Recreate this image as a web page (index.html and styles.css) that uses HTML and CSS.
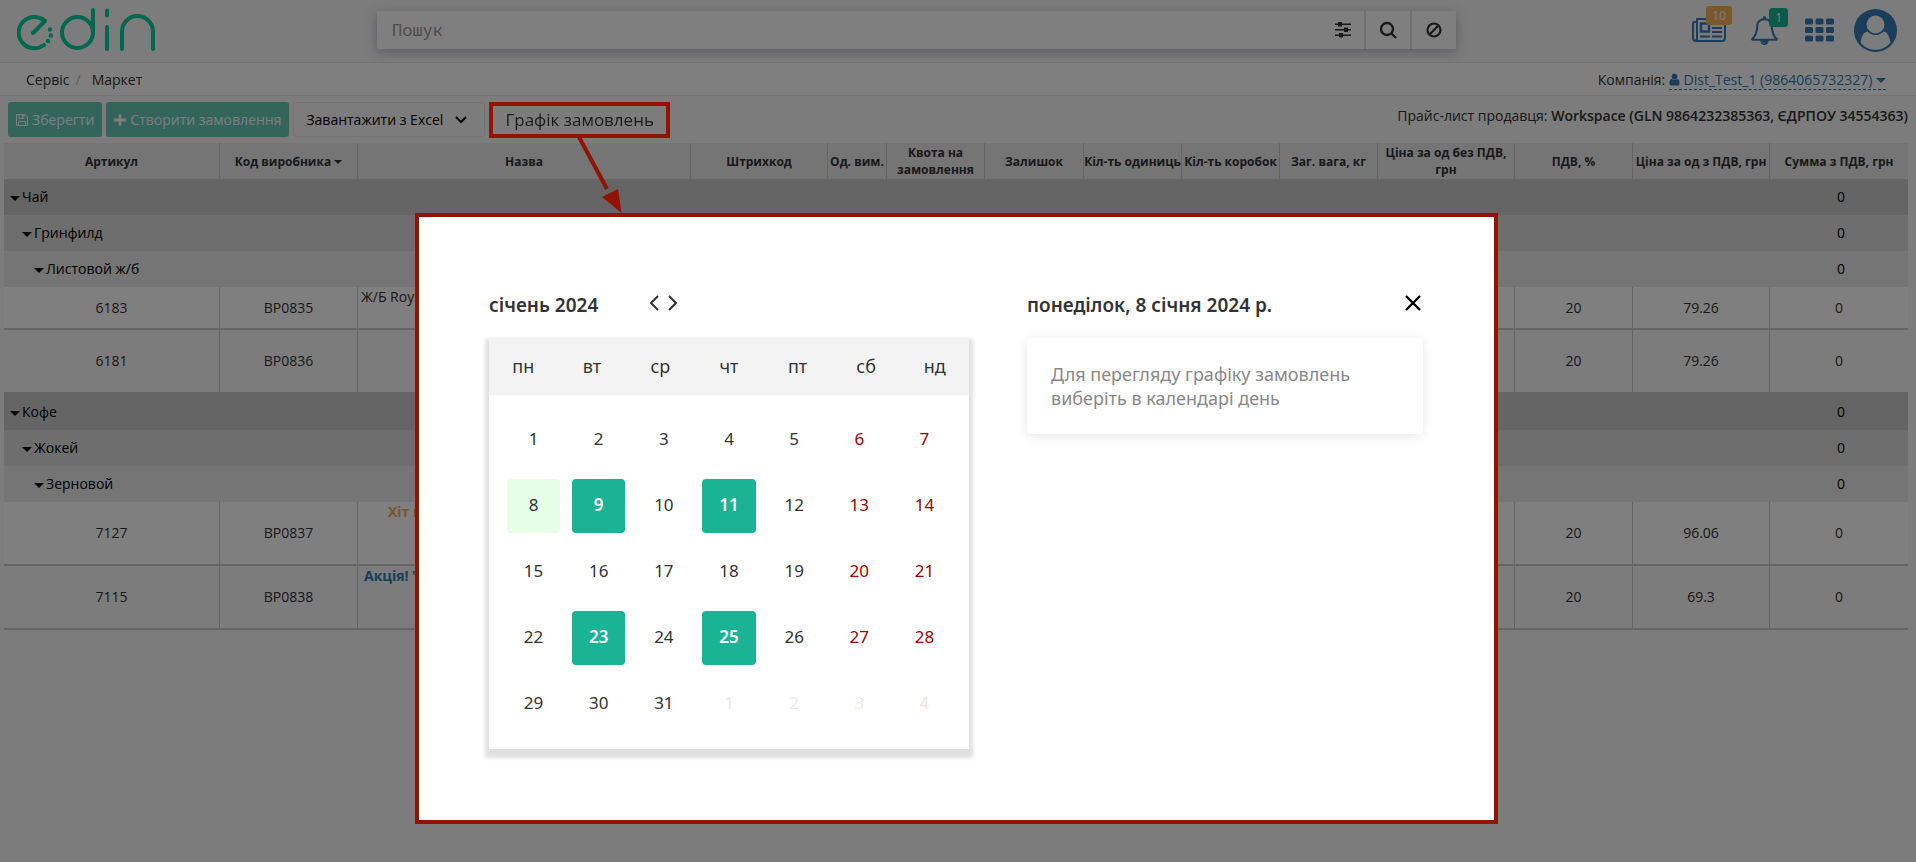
FILE: index.html
```html
<!DOCTYPE html>
<html lang="uk">
<head>
<meta charset="utf-8">
<title>EDIN Маркет</title>
<link rel="stylesheet" href="styles.css">
</head>
<body>
<header class="topbar">
  <a class="logo" href="#" aria-label="edin">
    <svg width="140" height="44" viewBox="0 0 140 44" fill="none" stroke="currentColor" stroke-width="4" stroke-linecap="round" stroke-linejoin="round">
      <path d="M16 25 L28 13 A15.700 15.700 0 1 0 27 37"/>
      <g fill="currentColor" stroke="none"><circle cx="33" cy="21.500" r="2.200"/><circle cx="33.800" cy="27.500" r="2.200"/><circle cx="31" cy="33" r="2.200"/></g>
      <circle cx="60.500" cy="24.500" r="15.500"/>
      <path d="M76 2V25M90 2.500V7.500M90 19V41M105 41V23.500A15.500 15.500 0 0 1 136 23.500V41"/>
    </svg>
  </a>
  <form class="search">
    <input class="search-input" type="text" placeholder="Пошук" aria-label="Пошук">
    <button class="search-btn filter" type="button" aria-label="Фільтри">
      <svg width="16" height="16" viewBox="0 0 16 16" fill="currentColor"><path d="M0 1.500h16v1.500H0zM0 7h16v1.500H0zM0 12.500h16v1.500H0z"/><rect x="3" y="0" width="4" height="4.500"/><rect x="9" y="5.500" width="4" height="4.500"/><rect x="4" y="11" width="4" height="4.500"/></svg>
    </button>
    <button class="search-btn" type="button" aria-label="Шукати">
      <svg width="18" height="18" viewBox="0 0 18 18" fill="none" stroke="currentColor" stroke-width="2.400"><circle cx="8" cy="8" r="6"/><path d="M12 12l5 5"/></svg>
    </button>
    <button class="search-btn" type="button" aria-label="Очистити">
      <svg width="16" height="16" viewBox="0 0 16 16" fill="none" stroke="currentColor" stroke-width="2.200"><circle cx="8" cy="8" r="6.500"/><path d="M12.500 3.500l-9 9"/></svg>
    </button>
  </form>
  <nav class="tools">
    <a class="tool news" href="#" aria-label="Новини">
      <svg width="34" height="24" viewBox="0 0 34 24" fill="none" stroke="currentColor" stroke-width="2"><path d="M5 4H2.500Q1 4 1 5.500V20Q1 23 4 23H30Q33 23 33 20V1H5V20Q5 23 3 23"/><rect x="9" y="5.500" width="8" height="8" stroke-width="2.400"/><path d="M20 5.500H30M20 10H30M20 14H30M20 18.500H30M8 18.500H18"/></svg>
      <span class="badge orange">10</span>
    </a>
    <a class="tool bell" href="#" aria-label="Сповіщення">
      <svg width="29" height="29" viewBox="0 0 1792 1792" fill="currentColor"><path d="M912 1696q0-16-16-16-59 0-101.500-42.500t-42.500-101.500q0-16-16-16t-16 16q0 73 51.500 124.500t124.500 51.500q16 0 16-16zm-666-288h1300q-266-300-266-832 0-51-24-105t-69-103-121.500-80.500-169.500-31.500-169.500 31.500-121.500 80.500-69 103-24 105q0 532-266 832zm1482 0q0 52-38 90t-90 38h-448q0 106-75 181t-181 75-181-75-75-181h-448q-52 0-90-38t-38-90q50-42 91-88t85-119.500 74.500-158.500 50-206 19.500-260q0-152 117-282.500t307-158.500q-8-19-8-39 0-40 28-68t68-28 68 28 28 68q0 20-8 39 190 28 307 158.500t117 282.500q0 139 19.500 260t50 206 74.500 158.500 85 119.500 91 88z"/></svg>
      <span class="badge green">1</span>
    </a>
    <a class="tool apps" href="#" aria-label="Сервіси">
      <svg width="29" height="24" viewBox="0 0 29 24" fill="currentColor"><rect width="8" height="6" y="0.500" rx="1.500"/><rect x="10.500" y="0.500" width="8" height="6" rx="1.500"/><rect x="21" y="0.500" width="8" height="6" rx="1.500"/><rect y="9" width="8" height="6" rx="1.500"/><rect x="10.500" y="9" width="8" height="6" rx="1.500"/><rect x="21" y="9" width="8" height="6" rx="1.500"/><rect y="17.500" width="8" height="6" rx="1.500"/><rect x="10.500" y="17.500" width="8" height="6" rx="1.500"/><rect x="21" y="17.500" width="8" height="6" rx="1.500"/></svg>
    </a>
    <a class="tool" href="#" aria-label="Профіль">
      <svg width="43" height="43" viewBox="0 0 43 43"><circle cx="21.500" cy="21.500" r="21.500" fill="currentColor"/><path d="M6.500 33.500C7.500 27 10 22.500 14 22.500Q17.500 26 21.500 26T29 22.500C33 22.500 35.500 27 36.500 33.500A19 19 0 0 1 6.500 33.500Z" fill="#f8f8f8"/><circle cx="21.500" cy="15.500" r="10.500" fill="currentColor"/><circle cx="21.500" cy="15.500" r="9" fill="#f8f8f8"/></svg>
    </a>
  </nav>
</header>

<div class="crumbbar">
  <nav class="crumbs"><a href="#">Сервіс</a><span class="slash">/</span><a href="#">Маркет</a></nav>
  <div class="company">Компанія:
    <a class="company-link" href="#"><svg width="11" height="13" viewBox="192 64 1408 1664" fill="currentColor"><path d="M1536 1399q0 109-62.500 187t-150.500 78h-854q-88 0-150.500-78t-62.500-187q0-85 8.500-160.500t31.500-152 58.500-131 94-89 134.500-34.500q131 128 313 128t313-128q76 0 134.500 34.500t94 89 58.500 131 31.500 152 8.500 160.500zm-256-887q0 159-112.500 271.500t-271.500 112.500-271.500-112.500-112.500-271.500 112.500-271.500 271.500-112.500 271.500 112.500 112.500 271.500z"/></svg> Dist_Test_1 (9864065732327) <span class="caret"></span></a>
  </div>
</div>

<main>
  <div class="toolbar">
    <button class="btn primary" type="button" disabled><svg width="12" height="12" viewBox="0 0 12 12" fill="none" stroke="currentColor"><path d="M.5.500H9L11.500 3V11.500H.5ZM3 .500V4.500H8V.500M2.500 11.500V7.500H9.500V11.500M6.500 1V3.500"/></svg>Зберегти</button>
    <button class="btn primary" type="button" disabled><svg width="12" height="12" viewBox="0 0 12 12" fill="currentColor"><path d="M4.500.500h3v4H12v3H7.500v4h-3v-4H0v-3h4.500z"/></svg>Створити замовлення</button>
    <label class="btn load">
      <select class="load-select" aria-label="Завантажити"><option>Завантажити з Excel</option></select>
      <svg width="12" height="8" viewBox="0 0 12 8" fill="none" stroke="currentColor" stroke-width="2"><path d="M1 1l5 5 5-5"/></svg>
    </label>
    <div class="highlight">
      <button class="schedule" type="button">Графік замовлень</button>
      <svg class="arrow" width="46" height="76" viewBox="0 0 46 76"><path d="M2 0L30 52" stroke="#911300" stroke-width="4" fill="none"/><path d="M44.500 76L25 60L41 52Z" fill="#911300"/></svg>
    </div>
    <div class="pricelist">Прайс-лист продавця: <b>Workspace (GLN 9864232385363, ЄДРПОУ 34554363)</b></div>
  </div>

  <table class="goods">
    <colgroup><col class="w216"><col class="w138"><col class="w333"><col class="w137"><col class="w59"><col class="w98"><col class="w99"><col class="w98"><col class="w98"><col class="w98"><col class="w137"><col class="w118"><col class="w137"><col class="w138"></colgroup>
    <thead>
      <tr><th>Артикул</th><th>Код виробника <span class="caret"></span></th><th>Назва</th><th>Штрихкод</th><th>Од. вим.</th><th>Квота на замовлення</th><th>Залишок</th><th>Кіл-ть одиниць</th><th>Кіл-ть коробок</th><th>Заг. вага, кг</th><th>Ціна за од без ПДВ, грн</th><th>ПДВ, %</th><th>Ціна за од з ПДВ, грн</th><th>Сумма з ПДВ, грн</th></tr>
    </thead>
    <tbody>
      <tr class="group g1"><td colspan="13"><span class="caret"></span>Чай</td><td>0</td></tr>
      <tr class="group g2"><td colspan="13"><span class="caret"></span>Гринфилд</td><td>0</td></tr>
      <tr class="group g3"><td colspan="13"><span class="caret"></span>Листовой ж/б</td><td>0</td></tr>
      <tr class="item short"><td>6183</td><td>BP0835</td><td class="name">Ж/Б Roy</td><td></td><td></td><td></td><td></td><td></td><td></td><td></td><td></td><td>20</td><td>79.26</td><td>0</td></tr>
      <tr class="item alt"><td>6181</td><td>BP0836</td><td></td><td></td><td></td><td></td><td></td><td></td><td></td><td></td><td></td><td>20</td><td>79.26</td><td>0</td></tr>
      <tr class="group g1"><td colspan="13"><span class="caret"></span>Кофе</td><td>0</td></tr>
      <tr class="group g2"><td colspan="13"><span class="caret"></span>Жокей</td><td>0</td></tr>
      <tr class="group g3"><td colspan="13"><span class="caret"></span>Зерновой</td><td>0</td></tr>
      <tr class="item"><td>7127</td><td>BP0837</td><td class="name hit"><b>Хіт п</b></td><td></td><td></td><td></td><td></td><td></td><td></td><td></td><td></td><td>20</td><td>96.06</td><td>0</td></tr>
      <tr class="item alt"><td>7115</td><td>BP0838</td><td class="name promo"><b>Акція!</b> "</td><td></td><td></td><td></td><td></td><td></td><td></td><td></td><td></td><td>20</td><td>69.3</td><td>0</td></tr>
    </tbody>
  </table>
</main>

<div class="overlay">
  <section class="modal" role="dialog" aria-label="Графік замовлень">
    <div class="left">
      <div class="head">
        <h2>січень 2024</h2>
        <div class="arrows">
          <button type="button" aria-label="Попередній місяць"><svg width="10" height="16" viewBox="0 0 10 16" fill="none" stroke="currentColor" stroke-width="2"><path d="M9 1L2 8l7 7"/></svg></button>
          <button type="button" aria-label="Наступний місяць"><svg width="10" height="16" viewBox="0 0 10 16" fill="none" stroke="currentColor" stroke-width="2"><path d="M1 1l7 7-7 7"/></svg></button>
        </div>
      </div>
      <div class="calendar">
        <div class="weekdays"><span>пн</span><span>вт</span><span>ср</span><span>чт</span><span>пт</span><span>сб</span><span>нд</span></div>
        <div class="days">
          <button>1</button><button>2</button><button>3</button><button>4</button><button>5</button><button class="we">6</button><button class="we">7</button>
          <button class="today">8</button><button class="on">9</button><button>10</button><button class="on">11</button><button>12</button><button class="we">13</button><button class="we">14</button>
          <button>15</button><button>16</button><button>17</button><button>18</button><button>19</button><button class="we">20</button><button class="we">21</button>
          <button>22</button><button class="on">23</button><button>24</button><button class="on">25</button><button>26</button><button class="we">27</button><button class="we">28</button>
          <button>29</button><button>30</button><button>31</button><button class="out">1</button><button class="out">2</button><button class="we out">3</button><button class="we out">4</button>
        </div>
      </div>
    </div>
    <div class="right">
      <div class="head">
        <h2>понеділок, 8 січня 2024 р.</h2>
        <button class="close" type="button" aria-label="Закрити"><svg width="16" height="16" viewBox="0 0 16 16" fill="none" stroke="currentColor" stroke-width="2.400"><path d="M1 1l14 14M15 1L1 15"/></svg></button>
      </div>
      <p class="hint">Для перегляду графіку замовлень виберіть в календарі день</p>
    </div>
  </section>
</div>
</body>
</html>
```

FILE: styles.css
```css
* { box-sizing: border-box; }
body {
  margin: 0;
  min-height: 100vh;
  background: #f8f8f8;
  color: #333;
  font: 14px/20px "Open Sans", "Noto Sans", sans-serif;
}
a { color: inherit; text-decoration: none; }
button, select, input { font: inherit; color: inherit; }
button { padding: 0; border: 0; background: none; }
svg { display: block; flex: none; }
b { font-weight: 600; }

.caret {
  display: inline-block;
  border: 4px solid transparent;
  border-top-color: currentColor;
  border-bottom: 0;
  vertical-align: middle;
}

.topbar {
  display: flex;
  justify-content: space-between;
  align-items: flex-start;
  height: 63px;
  padding: 0 19px 0 17px;
  border-bottom: 1px solid #e7e7e7;
}
.logo { width: 360px; padding-top: 8px; color: #00cfa0; }
.search {
  display: flex;
  flex: 1;
  max-width: 1079px;
  height: 38px;
  margin-top: 11px;
  background: #fff;
  box-shadow: 0 3px 12px rgba(60, 60, 110, .35);
}
.search-input {
  flex: 1;
  min-width: 0;
  padding: 0 15px;
  border: 0;
  background: none;
  font: 17px/38px "Noto Sans Mono", "DejaVu Sans Mono", monospace;
}
.search-input::placeholder { color: #999; }
.search-btn {
  display: flex;
  justify-content: center;
  align-items: center;
  width: 46px;
  border-left: 2px solid #e3e3e3;
}
.search-btn.filter { width: 42px; border-left: 0; }
.tools {
  display: flex;
  width: 441px;
  justify-content: flex-end;
  align-items: center;
  gap: 20px;
  height: 60px;
  color: #337ab7;
}
.tool { position: relative; }
.tool.bell { margin-left: 4px; }
.tool.apps { margin-left: 6px; }
.badge {
  position: absolute;
  top: -12px;
  right: -6px;
  padding: 0 6px;
  border-radius: 3px;
  color: #fff;
  font-size: 12px;
  line-height: 19px;
}
.bell .badge { top: -8px; right: -9px; }
.orange { background: #f8ac59; }
.green { background: #1ab394; }

.crumbbar {
  display: flex;
  justify-content: space-between;
  align-items: center;
  height: 33px;
  padding: 1px 30px 0 26px;
  border-bottom: 1px solid #e7e7e7;
  background: #fff;
}
.slash { padding: 0 11px 0 6px; color: #bbb; }
.company-link {
  display: inline-block;
  border-bottom: 1px dashed #337ab7;
  color: #337ab7;
  line-height: 18px;
}
.company-link svg { display: inline-block; vertical-align: -1px; }
.company-link .caret { border-width: 5px; border-bottom: 0; }

main { padding: 6px 8px 0 4px; }
.toolbar {
  display: flex;
  gap: 4px;
  height: 41px;
  padding-left: 4px;
}
.btn {
  display: flex;
  align-items: center;
  gap: 4px;
  height: 35px;
  padding: 0 8px;
  border-radius: 3px;
}
.primary { background: #1ab394; color: #fff; opacity: .65; }
.load {
  gap: 12px;
  padding: 0 17px 0 12px;
  border: 1px solid #e7e7e7;
  color: #000;
}
.load-select {
  padding: 0;
  border: 0;
  background: none;
  appearance: none;
}
.highlight {
  position: relative;
  z-index: 20;
  height: 36px;
  border: 4px solid #911300;
}
.schedule {
  display: block;
  height: 28px;
  padding: 0 12px;
  color: #1a1a1a;
  font-size: 17px;
}
.arrow { position: absolute; top: 31px; left: 84px; }
.pricelist { margin-left: auto; padding-top: 4px; }

.goods {
  width: 100%;
  table-layout: fixed;
  border-collapse: separate;
  border-spacing: 0;
  text-align: center;
}
.w59 { width: 59px; }
.w98 { width: 98px; }
.w99 { width: 99px; }
.w118 { width: 118px; }
.w137 { width: 137px; }
.w138 { width: 138px; }
.w216 { width: 216px; }
.w333 { width: 333px; }
.goods th {
  height: 36px;
  padding: 0;
  border-right: 1px solid #cbcbcb;
  background: #ebebeb;
  font-size: 12px;
  line-height: 17px;
}
.goods td { padding: 0; }
.goods th:last-child, .goods td:last-child { border-right: 0; }
.group td { height: 36px; color: #000; }
.group td:first-child { text-align: left; }
.group td:last-child { padding-left: 4px; }
.group .caret { margin-right: 2px; border-width: 5px; border-bottom: 0; }
.g1 { background: #cbcbcb; }
.g2 { background: #dcdcdc; }
.g3 { background: #ebebeb; }
.g1 td:first-child { padding-left: 6px; }
.g2 td:first-child { padding-left: 18px; }
.g3 td:first-child { padding-left: 30px; }
.item { background: #fff; }
.item.alt { background: #f8f8f8; }
.item td {
  height: 64px;
  border-right: 1px solid #cbcbcb;
  border-bottom: 2px solid #cbcbcb;
}
.item.short td { height: 43px; }
.item .name {
  padding: 0 0 0 3px;
  text-align: left;
  vertical-align: top;
}
.item .hit { padding-left: 30px; color: #f8ac59; }
.item .promo { padding-left: 6px; }
.promo b { color: #337ab7; }
.item .name b { font-weight: 700; }

.overlay {
  position: fixed;
  inset: 0;
  z-index: 10;
  display: flex;
  justify-content: center;
  align-items: flex-start;
  padding: 213px 3px 0 0;
  background: rgba(0, 0, 0, .5);
}
.modal {
  display: flex;
  gap: 58px;
  padding: 70px 71px 71px 70px;
  border: 4px solid #911300;
  background: #fff;
  font-family: "Noto Sans", "Open Sans", sans-serif;
}
.left { width: 480px; }
.right { width: 396px; }
.head {
  display: flex;
  align-items: flex-start;
  height: 51px;
  padding-top: 3px;
}
.head h2 {
  margin: 0;
  font-size: 19px;
  font-weight: 600;
  line-height: 30px;
}
.arrows { display: flex; gap: 9px; margin: 5px 0 0 51px; }
.close { margin: 5px 2px 0 auto; color: #000; }
.calendar {
  background: #fff;
  box-shadow: 0 5px 4px 4px #e0e0e0;
}
.weekdays {
  display: grid;
  grid-template-columns: repeat(7, 1fr);
  background: #f3f3f3;
  font-size: 18px;
  line-height: 57px;
  text-align: center;
}
.days {
  display: grid;
  grid-template-columns: repeat(7, 1fr);
  padding: 12px;
}
.days button {
  height: 54px;
  margin: 6px;
  border-radius: 4px;
  font-size: 17px;
  padding-bottom: 2px;
}
.days .we { color: #a00000; }
.days .today { background: #e6fde6; }
.days .on { background: #1ab394; color: #fff; font-weight: 600; }
.days .out { opacity: .1; }
.hint {
  margin: 0;
  padding: 24px;
  border-radius: 4px;
  box-shadow: 0 2px 12px rgba(0, 0, 0, .1);
  color: #888;
  font-size: 18px;
  line-height: 24px;
}
```
